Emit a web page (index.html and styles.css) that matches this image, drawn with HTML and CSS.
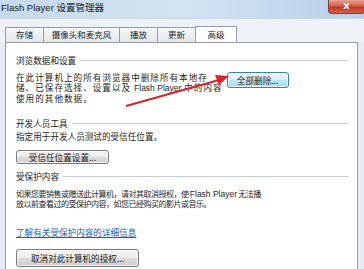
FILE: index.html
```html
<!DOCTYPE html>
<html>
<head>
<meta charset="utf-8">
<title>Flash Player 设置管理器</title>
<link rel="stylesheet" href="styles.css">
</head>
<body>
<div class="window">
  <div class="titlebar">
    <div class="title">Flash Player 设置管理器</div>
    <div class="close"><span>x</span></div>
  </div>
  <div class="tabs">
    <div class="tab w1">存储</div>
    <div class="tab w2">摄像头和麦克风</div>
    <div class="tab w3">播放</div>
    <div class="tab w4">更新</div>
    <div class="tab active">高级</div>
  </div>
  <div class="panel">
    <div class="group">浏览数据和设置</div>
    <div class="row">
      <p class="para p1">在此计算机上的所有浏览器中删除所有本地存<br>储、已保存选择、设置以及 <span class="lat">Flash Player</span> 中的内容<br>使用的其他数据。</p>
      <button class="btn focus b1">全部删除...</button>
    </div>
    <div class="group g2">开发人员工具</div>
    <p class="para p2">指定用于开发人员测试的受信任位置。</p>
    <button class="btn b2">受信任位置设置...</button>
    <div class="group g3">受保护内容</div>
    <p class="para p3">如果您要销售或赠送此计算机，请对其取消授权，使 <span class="lat">Flash Player</span> 无法播<br>放以前查看过的受保护内容，如您已经购买的影片或音乐。</p>
    <a class="link" href="#">了解有关受保护内容的详细信息</a>
    <button class="btn b3">取消对此计算机的授权...</button>
    <svg class="arrow" width="364" height="269" viewBox="0 0 364 269">
      <line x1="126" y1="106" x2="219" y2="80" stroke="#d5242a" stroke-width="2"/>
      <polygon points="229,76 215,75 219,85" fill="#d5242a"/>
    </svg>
  </div>
</div>
</body>
</html>
```

FILE: styles.css
```css
* { box-sizing: border-box; }
html, body { margin: 0; padding: 0; }
body {
  width: 364px;
  height: 269px;
  overflow: hidden;
  background: #e6ecf2;
  font-family: "Noto Sans CJK SC", "Noto Sans", sans-serif;
  font-size: 8.6px;
  color: #222;
}
.window {
  position: relative;
  height: 269px;
  display: flex;
  flex-direction: column;
}
.titlebar {
  flex: none;
  height: 19px;
  display: flex;
  justify-content: space-between;
  align-items: flex-start;
  background: linear-gradient(90deg, #c6d9ec 0%, #d3e3f3 50%, #c3d8ee 80%, #b7cfe8 100%);
  border-bottom: 1px solid #cdd7e1;
}
.title {
  padding: 2px 0 0 1px;
  font-family: "Liberation Sans", "Noto Sans CJK SC", sans-serif;
  font-size: 9.5px;
  line-height: 12px;
  color: #1a1a1a;
}
.close {
  width: 37px;
  height: 14px;
  margin-right: -1px;
  border: 1px solid #8a3a30;
  border-top: 0;
  border-radius: 0 0 4px 4px;
  background: linear-gradient(180deg, #e8a090 0%, #d45f4c 45%, #c03a26 55%, #d0604a 100%);
  color: #fff;
  text-align: center;
  font-family: "DejaVu Sans", sans-serif;
  font-weight: bold;
  font-size: 10px;
  line-height: 12px;
}
.tabs {
  flex: none;
  display: flex;
  align-items: flex-end;
  height: 23px;
  padding-left: 5px;
  background: #eef1f5;
}
.tab {
  height: 15px;
  border: 1px solid #969ca3;
  border-bottom: 0;
  border-right: 0;
  background: linear-gradient(180deg, #f7f7f7, #e4e6e9);
  text-align: center;
  line-height: 13px;
  font-size: 8.5px;
  color: #1e1e1e;
}
.w1 { width: 38px; }
.w2 { width: 76px; }
.w3 { width: 38px; }
.w4 { width: 38px; }
.tab.active {
  width: 42px;
  height: 17px;
  margin-bottom: -1px;
  border-right: 1px solid #969ca3;
  background: #fff;
  position: relative;
  line-height: 15px;
}
.panel {
  flex: 1;
  min-height: 0;
  overflow: hidden;
  position: relative;
  margin-left: 5px;
  width: 353px;
  background: #fff;
  border: 1px solid #969ca3;
  border-bottom: 0;
  padding: 11px 0 0 10px;
}
.group {
  display: flex;
  align-items: center;
  line-height: 12px;
  height: 12px;
  margin-right: 8px;
  color: #1e1e1e;
}
.group::after {
  content: "";
  flex: 1;
  height: 1px;
  margin-left: 4px;
  background: #c9ccd0;
}
.row {
  display: flex;
  align-items: flex-start;
  margin-top: 6px;
}
.para {
  margin: 0;
  line-height: 10px;
  color: #1e1e1e;
  white-space: nowrap;
}
.lat { font-family: "Liberation Sans", sans-serif; font-size: 8.5px; letter-spacing: 0; }
.p1 { letter-spacing: 1px; }
.g2 { margin-top: 14px; }
.p2 { margin-top: 2px; }
.g3 { margin-top: 6px; }
.p3 { margin-top: 7px; font-size: 8px; letter-spacing: -0.5px; }
.btn {
  display: block;
  padding: 0;
  font-family: "Noto Sans CJK SC", sans-serif;
  font-size: 8.6px;
  color: #1e1e1e;
  border: 1px solid #7a7a7a;
  border-radius: 3px;
  background: linear-gradient(180deg, #f4f4f4 0%, #ececec 48%, #dcdcdc 52%, #d0d0d0 100%);
  text-align: center;
  box-shadow: inset 0 0 0 1px rgba(255,255,255,0.7);
}
.focus {
  border-color: #3c7fb1;
  background: linear-gradient(180deg, #eaf6fd 0%, #d9f0fc 48%, #bee6fd 52%, #a7d9f5 100%);
}
.b1 { width: 62px; height: 16px; line-height: 13px; margin-top: 0; margin-left: 4px; }
.b2 { width: 93px; height: 14px; line-height: 11px; margin-top: 9px; }
.b3 { width: 123px; height: 18px; line-height: 15px; margin-top: 11px; }
.link {
  display: block;
  margin-top: 17px;
  line-height: 12px;
  height: 12px;
  color: #1f5fb8;
  text-decoration: underline;
  width: max-content;
}
.arrow {
  position: absolute;
  left: -6px;
  top: -43px;
  pointer-events: none;
}
```
